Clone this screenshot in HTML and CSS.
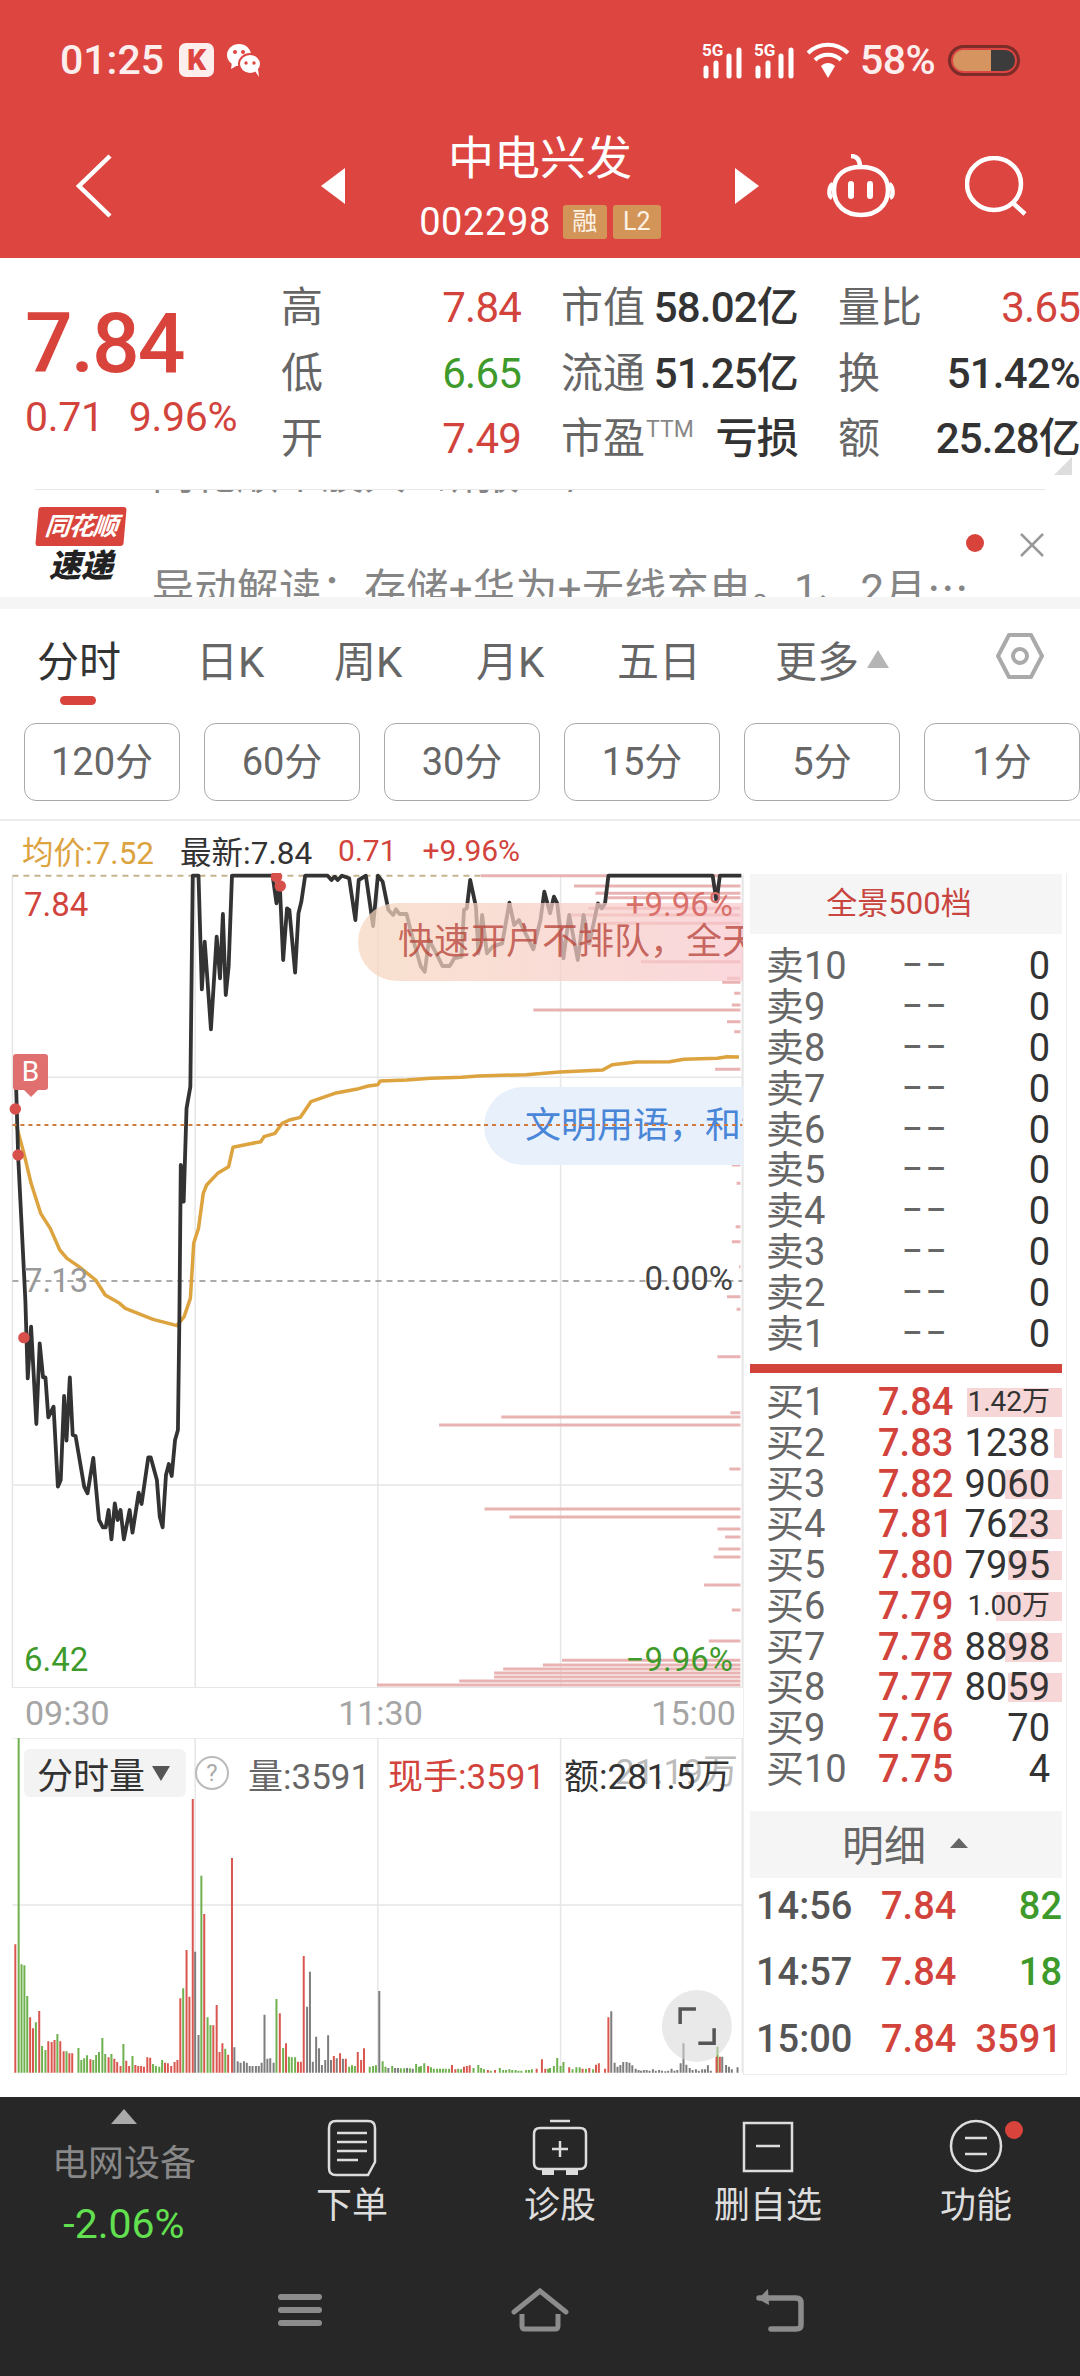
FILE: index.html
```html
<!DOCTYPE html>
<html lang="zh">
<head>
<meta charset="utf-8">
<title>中电兴发</title>
<link rel="stylesheet" href="styles.css">
</head>
<body>
<div class="page">
  <header class="header">
    <div class="status">
      <span class="clock">01:25</span>
      <span class="k-icon">K</span>
      <svg class="wechat" viewBox="0 0 36 36"><ellipse cx="13" cy="13" rx="12" ry="11" fill="#fff"/><path d="M6 20 5 27 12 23Z" fill="#fff"/><ellipse cx="24" cy="22" rx="11" ry="10" fill="#fff" stroke="#dd4541" stroke-width="2"/><path d="M29 29 33 35 32 27Z" fill="#fff"/><circle cx="9" cy="10" r="2" fill="#dd4541"/><circle cx="17" cy="10" r="2" fill="#dd4541"/><circle cx="20" cy="21" r="1.7" fill="#dd4541"/><circle cx="28" cy="21" r="1.7" fill="#dd4541"/></svg>
      <div class="status-right">
        <svg class="signal" viewBox="0 0 43 36"><text x="0" y="14" class="sig-text">5G</text><path d="M4 36V28M14 36V23M27 36V16M37 36V10" stroke="#fff" stroke-width="5" stroke-linecap="round" fill="none" transform="translate(0,-2)"/></svg>
        <svg class="signal" viewBox="0 0 43 36"><text x="0" y="14" class="sig-text">5G</text><path d="M4 36V28M14 36V23M27 36V16M37 36V10" stroke="#fff" stroke-width="5" stroke-linecap="round" fill="none" transform="translate(0,-2)"/></svg>
        <svg class="wifi" viewBox="0 0 44 36"><g fill="none" stroke="#fff" stroke-width="4"><path d="M2 11C13 0 31 0 42 11"/><path d="M9 18C16 11 28 11 35 18"/></g><path d="M15 24C19 20 25 20 29 24L22 36Z" fill="#fff"/></svg>
        <span class="batt-text">58%</span>
        <div class="battery"><div class="batt-fill"></div><div class="batt-rest"></div></div>
      </div>
    </div>
    <nav class="nav">
      <svg class="nav-back" viewBox="0 0 36 64"><path d="M34 2 3 32 34 62" fill="none" stroke="#fff" stroke-width="4.5"/></svg>
      <svg class="nav-tri nav-tri-left" viewBox="0 0 24 36"><path d="M24 0V36L0 18Z" fill="#fff"/></svg>
      <div class="nav-title">
        <div class="title">中电兴发</div>
        <div class="code-row"><span class="code">002298</span><span class="badge">融</span><span class="badge">L2</span></div>
      </div>
      <svg class="nav-tri nav-tri-right" viewBox="0 0 24 36"><path d="M0 0V36L24 18Z" fill="#fff"/></svg>
      <svg class="robot" viewBox="0 0 70 64"><g fill="none" stroke="#fff" stroke-width="4.5"><path d="M25 2C32 2 34 7 34 13"/><path d="M8 36C8 20 20 13 35 13S62 20 62 36C62 52 50 61 35 61S8 52 8 36Z"/><path d="M7 30C3 32 2 42 6 44M63 30C67 32 68 42 64 44"/></g><path d="M25 30V42M44 30V42" stroke="#fff" stroke-width="6" stroke-linecap="round"/></svg>
      <svg class="search" viewBox="0 0 62 60"><ellipse cx="29" cy="28" rx="27" ry="26" fill="none" stroke="#fff" stroke-width="4.5"/><path d="M48 47 60 58" stroke="#fff" stroke-width="4.5"/></svg>
    </nav>
  </header>

  <section class="quote">
    <div class="quote-main">
      <div class="big-price">7.84</div>
      <div class="change"><span>0.71</span><span>9.96%</span></div>
    </div>
    <div class="quote-grid">
      <div class="cell"><span class="lbl">高</span><span class="red">7.84</span></div>
      <div class="cell"><span class="lbl">市值</span><span class="dark">58.02亿</span></div>
      <div class="cell"><span class="lbl">量比</span><span class="red">3.65</span></div>
      <div class="cell"><span class="lbl">低</span><span class="green">6.65</span></div>
      <div class="cell"><span class="lbl">流通</span><span class="dark">51.25亿</span></div>
      <div class="cell"><span class="lbl">换</span><span class="dark">51.42%</span></div>
      <div class="cell"><span class="lbl">开</span><span class="red">7.49</span></div>
      <div class="cell"><span class="lbl">市盈<sup class="ttm">TTM</sup></span><span class="dark">亏损</span></div>
      <div class="cell"><span class="lbl">额</span><span class="dark">25.28亿</span></div>
    </div>
    <div class="corner"></div>
  </section>
  <div class="rule"></div>
  <section class="ticker">
    <div class="logo">
      <div class="logo-top">同花顺</div>
      <div class="logo-bottom">速递</div>
    </div>
    <div class="ticker-text">
      <div>同花顺个股大…研报16/1281</div>
      <div>异动解读：存储+华为+无线充电。1、2月⋯</div>
    </div>
    <span class="ticker-dot"></span>
    <svg class="ticker-x" viewBox="0 0 24 24"><path d="M1 1 23 23M23 1 1 23" stroke="#999" stroke-width="2.5"/></svg>
  </section>
  <div class="band"></div>

  <div class="tabs">
    <span class="tab tab-active">分时</span>
    <span class="tab">日K</span>
    <span class="tab">周K</span>
    <span class="tab">月K</span>
    <span class="tab">五日</span>
    <span class="tab">更多<i class="tab-tri"></i></span>
    <svg class="hex" viewBox="0 0 48 46"><path d="M13 2H35L46 23 35 44H13L2 23Z" fill="none" stroke="#aaa" stroke-width="4"/><circle cx="24" cy="23" r="7" fill="none" stroke="#aaa" stroke-width="4"/></svg>
  </div>
  <div class="periods">
    <span class="period">120分</span>
    <span class="period">60分</span>
    <span class="period">30分</span>
    <span class="period">15分</span>
    <span class="period">5分</span>
    <span class="period">1分</span>
  </div>
  <div class="legend">
    <span class="gold">均价:7.52</span>
    <span class="ink">最新:7.84</span>
    <span class="red leg-num">0.71</span>
    <span class="red leg-num">+9.96%</span>
  </div>

  <div class="market">
    <div class="charts">
      <div class="price-chart">
        <svg class="chart-svg" viewBox="0 39 1553.4 2445" preserveAspectRatio="none">
          <g class="grid">
            <path d="M26 47V2483M408 47V2483M790 47V2483M1172 47V2483M1552 47V2483M26 652H1552M26 1875H1552M26 2483H1552"/>
          </g>
          <path class="dash-top" d="M26 47H1005"/>
          <path class="depth" d="M1005 47H1548M1200 78H1548M1245 100H1548M1270 113H1548M1230 145H1548M1190 165H1548M1250 190H1548M1340 305H1548M1520 355H1548M1510 367H1548M1535 400H1548M1530 435H1548M1115 450H1548M1520 485H1548M1535 515H1548M1495 628H1548M1530 915H1548M1540 970H1548M1538 1100H1548M1530 1145H1548M1545 1220H1548M1520 1310H1548M1540 1348H1548M1500 1490H1548M1527 1658H1548M1048 1671H1548M918 1695H1548M1525 1827H1548M1013 1947H1548M1065 1971H1548M1500 2007H1548M1516 2031H1548M1502 2067H1548M1492 2091H1548M1472 2175H1548M1530 2250H1548M1482 2343H1548M1175 2401H1548M1135 2415H1548M1052 2427H1548M1033 2439H1548M1033 2451H1548M960 2463H1548M788 2475H1548"/>
          <path class="dash-mid" d="M26 1263H1552"/>
          <path class="avg" d="M33 790 50 880 65 970 85 1060 105 1105 125 1170 140 1195 165 1220 200 1260 220 1305 250 1330 262 1345 320 1378 370 1397 385 1370 398 1315 405 1150 415 1105 425 1000 432 975 455 940 478 920 487 862 510 855 545 845 552 830 575 820 590 790 605 780 628 772 650 725 680 710 700 700 750 686 770 678 790 674 795 663 850 660 900 655 965 652 1000 648 1100 644 1170 636 1260 630 1280 614 1330 606 1400 605 1430 598 1500 595 1520 590 1545 591"/>
          <path class="line" d="M33 645 38 890 53 1320 58 1555 65 1400 76 1692 83 1450 90 1552 95 1552 101 1672 112 1640 121 1880 127 1860 134 1608 139 1742 146 1552 152 1725 158 1728 176 1880 183 1900 195 1794 207 1980 215 2002 221 2002 227 1950 233 2038 240 1930 246 1980 252 1950 259 2038 271 1950 277 2018 290 1898 296 1932 310 1792 315 1792 328 1860 334 1970 340 2002 347 1845 353 1812 359 1848 366 1740 372 1710 375 1380 378 915 384 1025 390 745 398 680 403 47 415 47 422 388 428 245 441 508 453 230 460 355 466 162 472 405 478 320 485 47 570 47 578 130 585 75 592 300 600 145 605 150 617 338 624 160 630 125 638 47 685 47 693 60 700 50 706 60 715 47 730 55 743 180 750 60 765 47 780 198 790 47 800 65 812 150 822 165 828 148 835 162 850 162 862 230 880 320 888 335 897 240 912 280 925 318 940 318 950 295 965 290 970 150 976 145 983 60 995 140 1000 280 1008 165 1018 280 1030 260 1050 250 1065 128 1075 195 1085 180 1115 268 1130 180 1138 95 1150 160 1158 110 1165 130 1178 295 1190 165 1208 300 1220 165 1232 250 1250 130 1258 145 1265 130 1272 47 1490 47 1498 125 1505 47 1550 47"/>
          <path class="dash-last" d="M26 795H1552"/>
          <g class="dots">
            <ellipse cx="32" cy="747" rx="12" ry="17"/><ellipse cx="38" cy="885" rx="12" ry="17"/><ellipse cx="50" cy="1433" rx="12" ry="17"/><ellipse cx="578" cy="50" rx="12" ry="17"/><ellipse cx="586" cy="78" rx="12" ry="17"/>
          </g>
        </svg>
        <div class="b-mark">B</div>
        <span class="axis-l price-hi red">7.84</span>
        <span class="axis-l price-mid">7.13</span>
        <span class="axis-r pct-mid">0.00%</span>
        <span class="axis-l price-lo green">6.42</span>
        <span class="axis-r pct-lo green">−9.96%</span>
        <div class="bubble bubble-warm"><span>快速开户不排队，全天候</span></div>
        <div class="bubble bubble-blue"><span>文明用语，和谐</span></div>
        <span class="axis-r pct-hi">+9.96%</span>
        <svg class="chart-svg dash-over" viewBox="0 39 1553.4 2445" preserveAspectRatio="none"><path class="dash-last" d="M1012 795H1552"/></svg>
      </div>
      <div class="time-axis"><span>09:30</span><span>11:30</span><span>15:00</span></div>
      <div class="vol-chart">
        <svg class="chart-svg" viewBox="0 114 1553.4 1011" preserveAspectRatio="none">
          <path class="grid-path" d="M26 114H1552M26 615H1552M408 114V1118M790 114V1118M1172 114V1118M1552 114V1118"/>
          <path class="bar-green" d="M39 112V1118M45 793V1118M51 796V1118M57 888V1118M75 967V1118M88 1038V1118M95 1050V1118M120 1002V1118M139 1054V1118M164 1044V1118M170 1080V1118M176 1075V1118M182 1066V1118M195 1080V1118M201 1065V1118M207 1056V1118M214 1014V1118M220 1062V1118M233 1062V1118M258 1032V1118M277 1068V1118M320 1092V1118M326 1098V1118M333 1100V1118M339 1080V1118M383 865V1118M421 527V1118M434 952V1118M440 975V1118M471 1046V1118M578 897V1118M592 1044V1118M604 1070V1118M610 1072V1118M617 1072V1118M730 1100V1118M736 1096V1118M742 1098V1118M773 1100V1118M780 1098V1118M786 1096V1118M800 1084V1118M806 1100V1118M820 1098V1118M838 1105V1118M845 1105V1118M857 1105V1118M870 1092V1118M876 1100V1118M880 1098V1118M887 1090V1118M901 1102V1118M907 1106V1118M914 1106V1118M920 1106V1118M926 1106V1118M932 1106V1118M939 1106V1118M958 1106V1118M964 1108V1118M990 1104V1118M1000 1095V1118M1006 1104V1118M1012 1108V1118M1026 1112V1118M1045 1104V1118M1052 1110V1118M1058 1110V1118M1065 1108V1118M1071 1110V1118M1078 1110V1118M1084 1112V1118M1090 1112V1118M1100 1110V1118M1106 1110V1118M1112 1108V1118M1146 1106V1118M1150 1104V1118M1158 1098V1118M1165 1074V1118M1172 1098V1118M1178 1086V1118M1197 1108V1118M1205 1102V1118M1212 1102V1118M1225 1106V1118M1240 1108V1118M1500 1040V1118"/>
          <path class="bar-red" d="M32 733V1118M63 952V1118M69 985V1118M82 933V1118M101 1024V1118M108 1026V1118M114 1020V1118M126 1024V1118M133 1054V1118M145 1060V1118M151 1060V1118M189 1078V1118M227 1072V1118M239 1076V1118M245 1086V1118M252 1098V1118M264 1082V1118M270 1098V1118M283 1095V1118M289 1098V1118M295 1098V1118M301 1100V1118M308 1072V1118M314 1073V1118M345 1088V1118M351 1090V1118M358 1098V1118M365 1086V1118M371 1080V1118M377 895V1118M390 750V1118M396 890V1118M403 297V1118M427 642V1118M446 976V1118M453 915V1118M459 1056V1118M465 1030V1118M477 1064V1118M485 474V1118M585 940V1118M598 1030V1118M623 1085V1118M629 1085V1118M635 768V1118M698 1068V1118M711 1060V1118M723 1076V1118M748 1056V1118M755 1080V1118M761 1045V1118M895 1098V1118M945 1095V1118M952 1108V1118M970 1100V1118M976 1098V1118M982 1096V1118M1020 1110V1118M1035 1110V1118M1122 1106V1118M1133 1078V1118M1140 1106V1118M1190 1102V1118M1218 1106V1118M1232 1104V1118M1246 1094V1118M1252 1090V1118M1265 1106V1118M1272 952V1118M1498 1070V1118M1505 1070V1118"/>
          <path class="bar-grey" d="M408 755V1118M415 1005V1118M490 1042V1118M497 1084V1118M503 1088V1118M510 1084V1118M516 1088V1118M522 1098V1118M528 1098V1118M535 1098V1118M541 1098V1118M547 1088V1118M553 944V1118M559 1076V1118M565 1075V1118M572 1088V1118M642 920V1118M648 815V1118M654 1085V1118M661 1010V1118M667 1045V1118M673 1095V1118M680 1080V1118M686 1006V1118M692 1080V1118M704 1075V1118M717 1076V1118M793 873V1118M812 1104V1118M826 1104V1118M832 1104V1118M851 1104V1118M863 1106V1118M1278 934V1118M1285 1088V1118M1291 1100V1118M1297 1095V1118M1303 1086V1118M1310 1086V1118M1316 1088V1118M1322 1096V1118M1329 1106V1118M1335 1110V1118M1340 1112V1118M1346 1110V1118M1352 1110V1118M1358 1112V1118M1365 1108V1118M1371 1112V1118M1378 1110V1118M1384 1112V1118M1391 1114V1118M1397 1112V1118M1404 1106V1118M1410 1112V1118M1416 1110V1118M1423 1090V1118M1429 1030V1118M1435 1094V1118M1442 1104V1118M1448 1110V1118M1455 1108V1118M1461 1112V1118M1468 1108V1118M1474 1108V1118M1480 1096V1118M1486 1112V1118M1510 1070V1118M1518 1095V1118M1524 1100V1118M1530 1108V1118M1542 1102V1118"/>
          <ellipse class="fs-bg" cx="1457" cy="978" rx="73" ry="108"/>
          <path class="fs-icon" d="M1455 927H1422V972M1460 1030H1493V985"/>
        </svg>
        <div class="vol-head">
          <span class="vol-select">分时量<i class="vol-tri"></i></span>
          <span class="help">?</span>
          <span class="vol-q">量:3591</span>
          <span class="vol-now">现手:3591</span>
          <span class="vol-amt"><span class="ghost">21.19万</span><span class="amt-text">额:281.5万</span></span>
        </div>
      </div>
    </div>

    <aside class="book">
      <div class="book-head">全景500档</div>
      <div class="rows sell">
        <div class="row"><span class="lab">卖10</span><span class="mid">––</span><span class="qty">0</span></div>
        <div class="row"><span class="lab">卖9</span><span class="mid">––</span><span class="qty">0</span></div>
        <div class="row"><span class="lab">卖8</span><span class="mid">––</span><span class="qty">0</span></div>
        <div class="row"><span class="lab">卖7</span><span class="mid">––</span><span class="qty">0</span></div>
        <div class="row"><span class="lab">卖6</span><span class="mid">––</span><span class="qty">0</span></div>
        <div class="row"><span class="lab">卖5</span><span class="mid">––</span><span class="qty">0</span></div>
        <div class="row"><span class="lab">卖4</span><span class="mid">––</span><span class="qty">0</span></div>
        <div class="row"><span class="lab">卖3</span><span class="mid">––</span><span class="qty">0</span></div>
        <div class="row"><span class="lab">卖2</span><span class="mid">––</span><span class="qty">0</span></div>
        <div class="row"><span class="lab">卖1</span><span class="mid">––</span><span class="qty">0</span></div>
      </div>
      <div class="divider"></div>
      <div class="rows buy">
        <div class="row"><i class="bar" style="width:95px"></i><span class="lab">买1</span><span class="mid red">7.84</span><span class="qty small">1.42万</span></div>
        <div class="row"><i class="bar" style="width:8px"></i><span class="lab">买2</span><span class="mid red">7.83</span><span class="qty">1238</span></div>
        <div class="row"><i class="bar" style="width:57px"></i><span class="lab">买3</span><span class="mid red">7.82</span><span class="qty">9060</span></div>
        <div class="row"><i class="bar" style="width:50px"></i><span class="lab">买4</span><span class="mid red">7.81</span><span class="qty">7623</span></div>
        <div class="row"><i class="bar" style="width:54px"></i><span class="lab">买5</span><span class="mid red">7.80</span><span class="qty">7995</span></div>
        <div class="row"><i class="bar" style="width:66px"></i><span class="lab">买6</span><span class="mid red">7.79</span><span class="qty small">1.00万</span></div>
        <div class="row"><i class="bar" style="width:57px"></i><span class="lab">买7</span><span class="mid red">7.78</span><span class="qty">8898</span></div>
        <div class="row"><i class="bar" style="width:54px"></i><span class="lab">买8</span><span class="mid red">7.77</span><span class="qty">8059</span></div>
        <div class="row"><span class="lab">买9</span><span class="mid red">7.76</span><span class="qty">70</span></div>
        <div class="row"><span class="lab">买10</span><span class="mid red">7.75</span><span class="qty">4</span></div>
      </div>
      <div class="detail-head"><span>明细</span><i class="detail-tri"></i></div>
      <div class="trades">
        <div class="trade"><span class="t-time">14:56</span><span class="red">7.84</span><span class="t-vol green">82</span></div>
        <div class="trade"><span class="t-time">14:57</span><span class="red">7.84</span><span class="t-vol green">18</span></div>
        <div class="trade"><span class="t-time">15:00</span><span class="red">7.84</span><span class="t-vol red">3591</span></div>
      </div>
    </aside>
  </div>

  <footer class="footer">
    <div class="actions">
      <div class="sector">
        <i class="sector-tri"></i>
        <span class="sector-name">电网设备</span>
        <span class="sector-pct">-2.06%</span>
      </div>
      <div class="action">
        <svg class="act-icon" viewBox="0 0 56 58"><g fill="none" stroke="#ddd" stroke-width="2.5"><path d="M12 2H44Q51 2 51 9V43L44 56H12Q5 56 5 49V9Q5 2 12 2Z"/><path d="M13 14H43M13 23H43M13 32H43M13 41H34"/></g></svg>
        <span>下单</span>
      </div>
      <div class="action">
        <svg class="act-icon" viewBox="0 0 56 58"><g fill="none" stroke="#ddd" stroke-width="2.5"><path d="M8 9H48Q54 9 54 15V44Q54 50 48 50H8Q2 50 2 44V15Q2 9 8 9Z"/><path d="M18 2H38M28 22V38M20 30H36"/></g><path d="M10 50H22V56H10ZM34 50H46V56H34Z" fill="#ddd"/></svg>
        <span>诊股</span>
      </div>
      <div class="action">
        <svg class="act-icon" viewBox="0 0 56 58"><g fill="none" stroke="#ddd" stroke-width="2.5"><path d="M4 4H52V52H4Z"/><path d="M16 27H40"/></g></svg>
        <span>删自选</span>
      </div>
      <div class="action">
        <svg class="act-icon" viewBox="0 0 56 58"><g fill="none" stroke="#ddd" stroke-width="2.5"><ellipse cx="28" cy="27" rx="25" ry="25"/><path d="M17 19H39M17 35H39"/></g></svg>
        <span>功能</span>
        <i class="act-dot"></i>
      </div>
    </div>
    <div class="sysnav">
      <svg class="sys sys-menu" viewBox="0 0 44 36"><path d="M3 5H41M3 18H41M3 31H41" stroke="#8c8c8c" stroke-width="6" stroke-linecap="round"/></svg>
      <svg class="sys sys-home" viewBox="0 0 58 44"><path d="M3 24 29 3 55 24" fill="none" stroke="#8c8c8c" stroke-width="5" stroke-linecap="round"/><path d="M11 26V38Q11 41 14 41H44Q47 41 47 38V26" fill="none" stroke="#8c8c8c" stroke-width="5"/></svg>
      <svg class="sys sys-back" viewBox="0 0 48 44"><path d="M3 10H40Q45 10 45 15V37Q45 41 40 41H15" fill="none" stroke="#8c8c8c" stroke-width="5.5" stroke-linecap="round"/><path d="M12 1 2 11 13 17Z" fill="#8c8c8c"/></svg>
    </div>
  </footer>
</div>
</body>
</html>
```
FILE: styles.css
```css
* { box-sizing: border-box; margin: 0; padding: 0; }
html, body { background: #fff; }
body { width: 1080px; height: 2376px; overflow: hidden; font-family: Roboto, "Noto Sans CJK SC", sans-serif; color: #333; }
i { display: block; font-style: normal; }
.page { width: 1080px; height: 2376px; display: flex; flex-direction: column; }
.red { color: #d2433c; }
.green { color: #3f9a2c; }
.gold { color: #dca33f; }
.ink { color: #333; }

/* header */
.header { height: 258px; background: #dd4541; color: #fff; flex: none; }
.status { height: 120px; display: flex; align-items: center; padding-left: 60px; }
.clock { font-size: 41px; font-weight: 500; width: 119px; color: #fdeeee; white-space: nowrap; }
.k-icon { width: 35px; height: 34px; border-radius: 7px; background: #fdeeee; color: #dd4541; font-size: 30px; font-weight: 900; line-height: 34px; text-align: center; }
.wechat { width: 36px; height: 36px; margin-left: 12px; }
.status-right { margin-left: auto; display: flex; align-items: center; padding-right: 60px; height: 40px; }
.signal { width: 43px; height: 36px; margin-right: 9px; overflow: visible; }
.sig-text { font: 700 17px Roboto, sans-serif; fill: #fff; }
.wifi { width: 44px; height: 36px; margin-left: 0; }
.batt-text { font-size: 41px; font-weight: 500; margin-left: 10px; width: 76px; color: #fdeeee; white-space: nowrap; letter-spacing: -.5px; }
.battery { margin-left: 12px; width: 72px; height: 31px; border: 3px solid #7b2b28; border-radius: 16px; padding: 2px; display: flex; overflow: hidden; }
.batt-fill { width: 38px; background: #d69560; border-radius: 10px 0 0 10px; }
.batt-rest { flex: 1; background: #3c3c3c; border-radius: 0 10px 10px 0; }

.nav { height: 132px; display: flex; align-items: center; padding-left: 76px; }
.nav-back { width: 36px; height: 64px; flex: none; }
.nav-tri { width: 24px; height: 36px; flex: none; }
.nav-tri-left { margin-left: 209px; }
.nav-title { width: 390px; flex: none; text-align: center; }
.title { font-size: 46px; line-height: 72px; height: 72px; }
.code-row { height: 56px; display: flex; align-items: center; justify-content: center; }
.code { font-size: 38px; margin-right: 12px; letter-spacing: .6px; }
.badge { height: 34px; min-width: 44px; margin-right: 6px; padding: 0 6px; background: #d39458; border-radius: 3px; font-size: 25px; line-height: 34px; text-align: center; color: #fdf2e6; }
.badge:last-child { margin-right: 0; min-width: 48px; }
.robot { width: 70px; height: 64px; margin-left: 67px; flex: none; }
.search { width: 62px; height: 60px; margin-left: 69px; flex: none; }

/* quote */
.quote { position: relative; height: 231px; flex: none; display: flex; }
.quote-main { width: 281px; padding-left: 25px; flex: none; }
.big-price { font-size: 84px; font-weight: 500; color: #d8443c; line-height: 84px; margin-top: 44px; letter-spacing: -2px; }
.change { display: flex; gap: 25px; font-size: 41px; color: #d2433c; line-height: 48px; margin-top: 7px; letter-spacing: -.3px; }
.quote-grid { flex: 1; display: grid; grid-template-columns: 240px 237px 242px; column-gap: 40px; grid-auto-rows: 65.5px; padding-top: 17px; font-size: 42px; }
.cell { display: flex; justify-content: space-between; align-items: center; line-height: 65px; white-space: nowrap; letter-spacing: -.8px; }
.lbl { color: #666; letter-spacing: 0; }
.dark { color: #333; font-weight: 500; }
.ttm { font-size: 23px; color: #888; vertical-align: 16px; line-height: 0; margin-left: 1px; }
.corner { position: absolute; right: 8px; top: 199px; width: 0; height: 0; border-left: 18px solid transparent; border-bottom: 18px solid #ddd; }
.rule { height: 1px; margin: 0 35px; background: #e8e8e8; flex: none; }

/* ticker */
.ticker { position: relative; height: 107px; overflow: hidden; flex: none; }
.logo { position: absolute; left: 37px; top: 17px; width: 88px; text-align: center; }
.logo-top { height: 39px; background: #d8443c; color: #fff; font-size: 25px; line-height: 39px; font-style: italic; font-weight: 700; border-radius: 3px; transform: skewX(-5deg); white-space: nowrap; letter-spacing: -1px; }
.logo-bottom { margin-top: 3px; font-size: 32px; line-height: 34px; font-weight: 900; font-style: italic; color: #222; }
.ticker-text { margin-left: 152px; margin-top: -73px; font-size: 42px; line-height: 115px; color: #858585; white-space: nowrap; letter-spacing: .4px; }
.ticker-dot { position: absolute; left: 966px; top: 44px; width: 18px; height: 18px; border-radius: 50%; background: #d8443c; }
.ticker-x { position: absolute; left: 1020px; top: 43px; width: 24px; height: 24px; }
.band { height: 12px; background: #f5f5f5; flex: none; }

/* tabs */
.tabs { position: relative; height: 114px; padding-left: 37px; flex: none; display: grid; grid-template-columns: 159px 138px 142px 141px 158px 1fr; font-size: 42px; color: #666; align-content: start; }
.tab { position: relative; white-space: nowrap; height: 99px; display: flex; align-items: center; }
.tab-active { color: #333; }
.tab-active::after { content: ""; position: absolute; left: 23px; top: 87px; width: 36px; height: 9px; border-radius: 5px; background: #d8443c; }
.tab-tri { width: 0; height: 0; margin-left: 8px; border: 11px solid transparent; border-top: 0; border-bottom: 18px solid #b5b5b5; }
.hex { position: absolute; left: 996px; top: 24px; width: 48px; height: 46px; }
.periods { display: flex; gap: 24px; padding-left: 24px; flex: none; height: 78px; }
.period { width: 156px; height: 78px; flex: none; border: 1px solid #aaa; border-radius: 12px; text-align: center; font-size: 38px; line-height: 76px; color: #666; }
.legend { margin-top: 18px; height: 54px; border-top: 2px solid #ececec; padding: 6px 0 0 22px; display: flex; align-items: center; gap: 26px; font-size: 31.5px; flex: none; white-space: nowrap; }
.leg-num { font-size: 30px; }

/* market */
.market { display: flex; height: 1202px; flex: none; }
.charts { width: 743px; flex: none; }
.price-chart { position: relative; height: 815px; overflow: hidden; }
.chart-svg { position: absolute; left: 0; top: 0; width: 100%; height: 100%; display: block; }
.chart-svg path, .chart-svg ellipse { vector-effect: non-scaling-stroke; }
.dash-over { pointer-events: none; }
.grid path, .grid-path { fill: none; stroke: #e6e6e6; stroke-width: 1.5; }
.dash-top { fill: none; stroke: #c7b48f; stroke-width: 2; stroke-dasharray: 6 5; }
.depth { fill: none; stroke: #eab3b3; stroke-width: 3; }
.dash-mid { fill: none; stroke: #aaa; stroke-width: 2; stroke-dasharray: 6 5; }
.dash-last { fill: none; stroke: #d07a3e; stroke-width: 2; stroke-dasharray: 4 4; }
.avg { fill: none; stroke: #dca33f; stroke-width: 3.5; stroke-linejoin: round; }
.line { fill: none; stroke: #333; stroke-width: 3.8; stroke-linejoin: round; }
.dots ellipse { fill: #d8504c; }
.b-mark { position: absolute; left: 13px; top: 181px; width: 35px; height: 36px; border-radius: 3px; background: #e07070; color: #fff; font-size: 28px; line-height: 36px; text-align: center; }
.b-mark::after { content: ""; position: absolute; left: 11px; top: 36px; border: 7px solid transparent; border-top-color: #e07070; border-bottom: 0; }
.axis-l, .axis-r { position: absolute; font-size: 33px; line-height: 40px; }
.axis-l { left: 24px; }
.axis-r { right: 10px; }
.price-hi { top: 12px; }
.pct-hi { top: 12px; color: #d9706a; }
.price-mid { top: 388px; color: #999; }
.pct-mid { top: 386px; color: #444; }
.price-lo { top: 767px; }
.pct-lo { top: 767px; }
.bubble { position: absolute; overflow: hidden; white-space: nowrap; border-radius: 39px 0 0 39px; height: 78px; line-height: 78px; font-size: 36px; }
.bubble-warm { left: 358px; width: 385px; top: 30px; padding-left: 40px; background: linear-gradient(90deg, rgba(246,214,190,.72), rgba(248,200,206,.72)); color: rgba(185,70,60,.8); }
.bubble-blue { left: 484px; width: 259px; top: 214px; padding-left: 41px; background: #e8f0fb; color: #4a86d8; }
.time-axis { height: 50px; padding: 0 7px 0 25px; display: flex; justify-content: space-between; align-items: flex-start; font-size: 34px; line-height: 50px; color: #a5a5a5; }
.vol-chart { position: relative; height: 337px; }
.bar-green, .bar-red, .bar-grey { fill: none; stroke-width: 2; }
.bar-green { stroke: #6fb14f; }
.bar-red { stroke: #d9574f; }
.bar-grey { stroke: #7d7d7d; }
.fs-bg { fill: rgba(215,215,215,.55); }
.fs-icon { fill: none; stroke: #555; stroke-width: 3.5; }
.vol-head { position: absolute; left: 24px; top: 11px; right: 0; height: 48px; display: flex; align-items: center; font-size: 35px; white-space: nowrap; }
.vol-select { width: 162px; height: 48px; background: #f3f3f3; border-radius: 6px; display: flex; align-items: center; padding-left: 13px; font-size: 36px; color: #333; }
.vol-tri { margin-left: 7px; border: 9px solid transparent; border-bottom: 0; border-top: 15px solid #555; }
.help { width: 34px; height: 34px; margin-left: 9px; border: 2px solid #bbb; border-radius: 50%; color: #aaa; font-size: 24px; line-height: 30px; text-align: center; flex: none; }
.vol-q { margin-left: 19px; width: 140px; color: #666; }
.vol-now { width: 176px; color: #d2433c; }
.vol-amt { position: relative; color: #333; }
.ghost { position: absolute; left: 51px; top: -5px; color: #bbb; }
.amt-text { position: relative; }

/* order book */
.book { width: 324px; height: 1202px; flex: none; border: 1px solid #eee; border-top-color: #fff; border-bottom-width: 1px; padding: 0 4px 0 6px; }
.book-head { height: 60px; background: #f5f5f5; text-align: center; padding-right: 14px; color: #c9453f; font-size: 31px; line-height: 60px; }
.rows { font-size: 38px; }
.sell { margin-top: 12px; }
.row { position: relative; display: grid; grid-template-columns: 112px 70px 1fr; padding: 0 12px 0 16px; align-items: center; white-space: nowrap; }
.row > span { position: relative; }
.sell .row { height: 40.9px; line-height: 40.9px; }
.buy .row { height: 40.8px; line-height: 40.8px; }
.lab { color: #666; }
.mid { text-align: right; }
.sell .mid { color: #666; font-size: 31px; letter-spacing: 4px; font-weight: 500; margin-right: -2px; }
.buy .mid { font-weight: 500; }
.qty { text-align: right; color: #333; }
.small { font-size: 28px; }
.bar { position: absolute; right: 0; top: 6px; height: 29px; background: #f6d6d6; }
.divider { height: 9px; margin: 9px 0; background: #d2433c; }
.detail-head { margin-top: 21px; height: 67px; background: #f5f5f5; display: flex; align-items: center; padding: 0 0 3px 92px; font-size: 42px; color: #666; }
.detail-tri { margin-left: 24px; border: 9px solid transparent; border-top: 0; border-bottom: 10px solid #666; }
.trades { padding-top: 3px; }
.trade { height: 50px; margin-bottom: 16.5px; padding: 0 0 0 6px; display: grid; grid-template-columns: 125px 72px 1fr; align-items: center; font-size: 38px; font-weight: 500; }
.t-time { color: #555; }
.t-vol { text-align: right; }

/* footer */
.footer { margin-top: 22px; height: 279px; background: #272727; flex: none; }
.actions { display: grid; grid-template-columns: 248px repeat(4, 208px); height: 166px; }
.sector { display: flex; flex-direction: column; align-items: center; padding-top: 12px; }
.sector-tri { border: 13px solid transparent; border-top: 0; border-bottom: 15px solid #aaa; }
.sector-name { margin-top: 15px; font-size: 36px; line-height: 50px; color: #888; }
.sector-pct { margin-top: 10px; font-size: 41px; line-height: 50px; color: #62e050; }
.action { position: relative; display: flex; flex-direction: column; align-items: center; padding-top: 22px; font-size: 36px; line-height: 50px; color: #ddd; }
.act-icon { width: 56px; height: 58px; }
.action span { margin-top: 4px; }
.act-dot { position: absolute; left: 133px; top: 24px; width: 18px; height: 18px; border-radius: 50%; background: #d8443c; }
.sysnav { display: grid; grid-template-columns: repeat(3, 240px); justify-content: center; justify-items: center; align-items: center; height: 94px; }
.sys-menu { width: 44px; height: 36px; }
.sys-home { width: 58px; height: 44px; }
.sys-back { width: 48px; height: 44px; }
```
